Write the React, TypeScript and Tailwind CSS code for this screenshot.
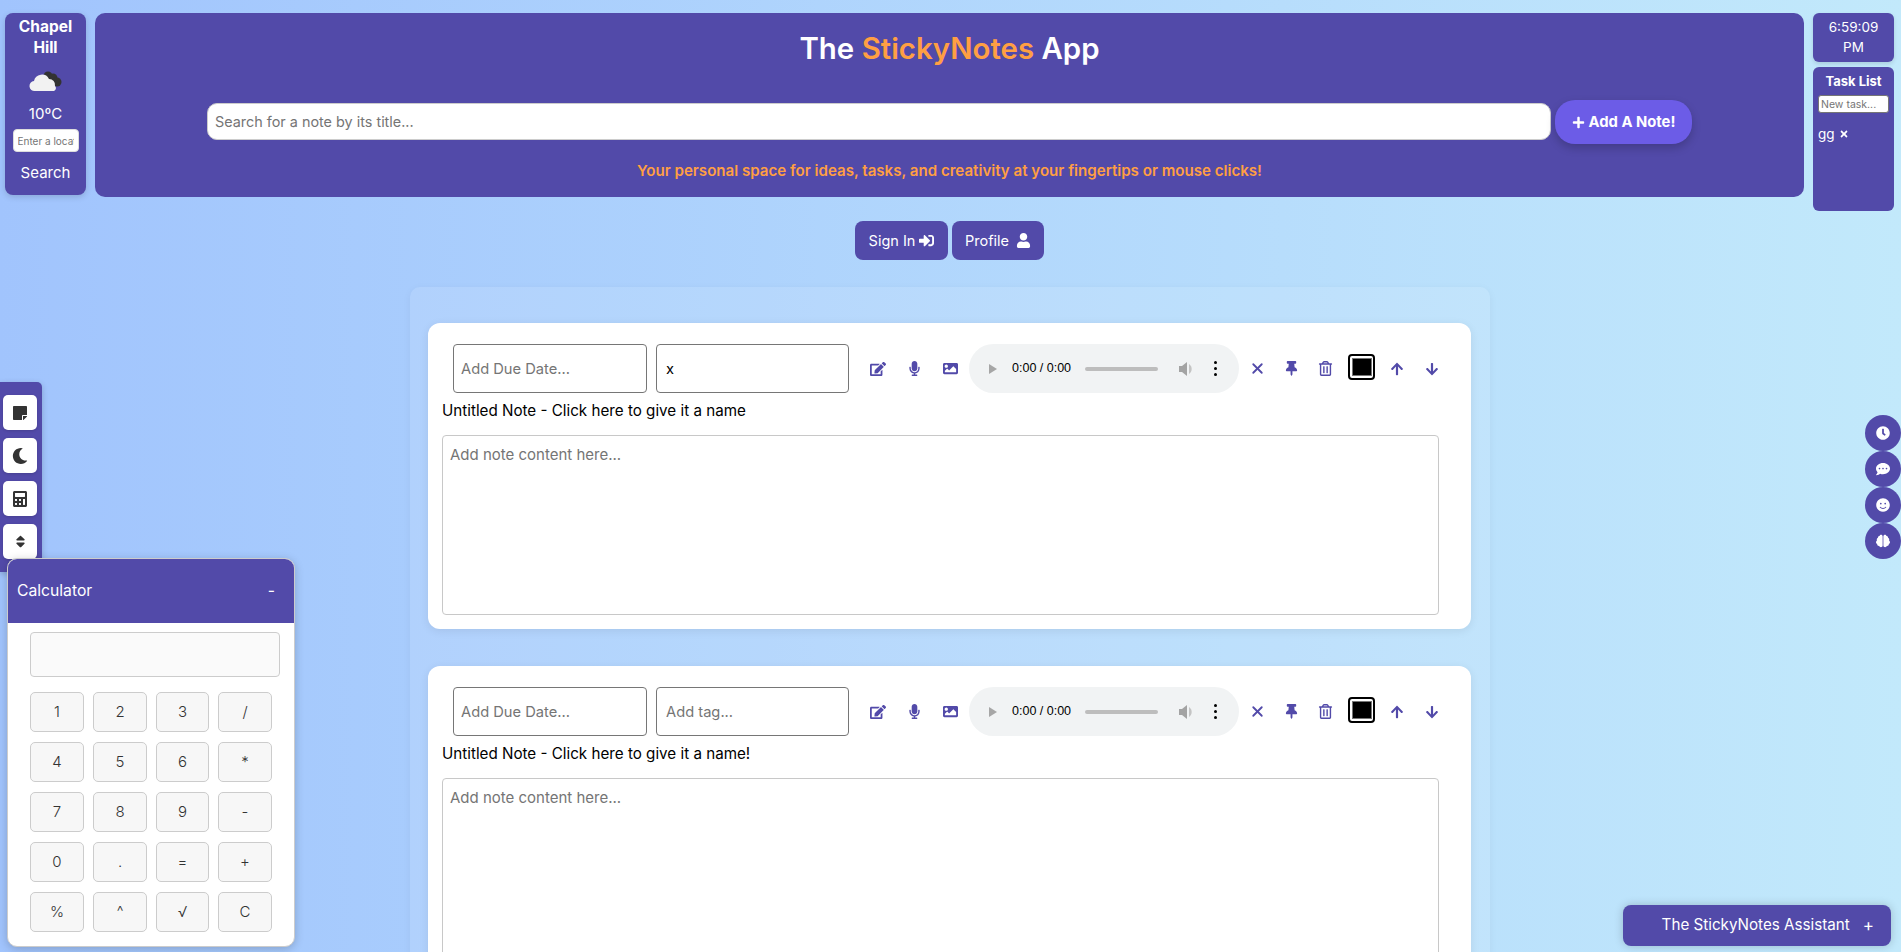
import {
  FaArrowDown,
  FaArrowUp,
  FaBrain,
  FaCalculator,
  FaClock,
  FaCommentDots,
  FaEdit,
  FaImage,
  FaMicrophone,
  FaMoon,
  FaPlus,
  FaRegTrashAlt,
  FaSignInAlt,
  FaSmile,
  FaSort,
  FaStickyNote,
  FaThumbtack,
  FaTimes,
  FaUser,
} from 'react-icons/fa'
import { X } from 'lucide-react'

const calcKeys = ['1', '2', '3', '/', '4', '5', '6', '*', '7', '8', '9', '-', '0', '.', '=', '+', '%', '^', '√', 'C']

function CloudIcon() {
  return (
    <svg width="34" height="22" viewBox="0 0 34 22">
      <g fill="#333333">
        <circle cx="19" cy="6" r="4.5" />
        <circle cx="24" cy="8" r="4.5" />
        <circle cx="28" cy="12" r="4.5" />
      </g>
      <path
        d="M6 21a5 5 0 0 1-1-10 8 8 0 0 1 15-2 6 6 0 0 1 6 7 3 3 0 0 1-1 5z"
        fill="#f2f2f2"
      />
    </svg>
  )
}

function AudioBar() {
  return (
    <div className="flex h-[49px] w-[270px] shrink-0 items-center rounded-full bg-[#f1f3f4] font-['Liberation_Sans',sans-serif] text-[12.5px] text-black">
      <svg className="ml-[20px]" width="8" height="10" viewBox="0 0 8 10">
        <path d="M0 0l8 5-8 5z" fill="#a6a6a6" />
      </svg>
      <span className="ml-[15px] w-[58px] whitespace-nowrap">0:00 / 0:00</span>
      <div className="ml-[15px] h-[4px] w-[73px] rounded-full bg-[#bdbdbd]" />
      <svg className="ml-[21px]" width="16" height="16" viewBox="0 0 16 16">
        <path d="M0 5h3l5-4v14l-5-4H0z" fill="#a3a3a3" />
        <path d="M10 3a6 6 0 0 1 0 10z" fill="#c4c4c4" />
      </svg>
      <div className="ml-[19px] flex flex-col gap-[3px]">
        <span className="size-[3px] rounded-full bg-black" />
        <span className="size-[3px] rounded-full bg-black" />
        <span className="size-[3px] rounded-full bg-black" />
      </div>
    </div>
  )
}

function NoteCard({ tag, title }: { tag?: string; title: string }) {
  return (
    <div className="h-[306px] w-[1043px] shrink-0 rounded-[12px] bg-white pl-[14px] pr-[32px] pt-[21px] shadow-[0_2px_10px_rgba(0,0,0,0.08)]">
      <div className="flex w-[1020px] items-center pl-[11px] text-[#524aa9]">
        <input
          placeholder="Add Due Date..."
          className="h-[49px] w-[194px] rounded-[4px] border border-[#767676] px-[7px] text-[14.7px] text-black placeholder:text-[#757575]"
        />
        <input
          placeholder="Add tag..."
          defaultValue={tag}
          className="ml-[9px] h-[49px] w-[193px] rounded-[4px] border border-[#767676] px-[9px] text-[14.7px] text-black placeholder:text-[#757575]"
        />
        <div className="ml-[11px] flex w-[36px] justify-center">
          <FaEdit size={16} />
        </div>
        <div className="flex w-[36px] justify-center">
          <FaMicrophone size={15} />
        </div>
        <div className="flex w-[36px] justify-center">
          <FaImage size={15} />
        </div>
        <div className="ml-[1px]">
          <AudioBar />
        </div>
        <div className="flex w-[36px] justify-center">
          <X size={17} strokeWidth={2.6} />
        </div>
        <div className="flex w-[33px] justify-center">
          <FaThumbtack size={15} />
        </div>
        <div className="flex w-[35px] justify-center">
          <FaRegTrashAlt size={15} />
        </div>
        <div className="mb-[4px] ml-[5px] flex h-[26px] w-[27px] items-center justify-center rounded-[4px] border-2 border-black bg-white">
          <div className="h-[18px] w-[20px] border border-[#767676] bg-black" />
        </div>
        <div className="ml-[11px] flex w-[22px] justify-center">
          <FaArrowUp size={14} />
        </div>
        <div className="ml-[13px] flex w-[22px] justify-center">
          <FaArrowDown size={14} />
        </div>
      </div>
      <div className="mt-[6px] h-[24px] text-[15.2px] leading-[24px] text-black">{title}</div>
      <textarea
        placeholder="Add note content here..."
        className="mt-[12px] block h-[180px] w-[997px] resize-none rounded-[4px] border border-[#c8c8c8] px-[7px] py-[8px] text-[15px] placeholder:text-[#757575]"
      />
    </div>
  )
}

function SideTool({ children }: { children: React.ReactNode }) {
  return (
    <div className="flex h-[35px] w-[34px] items-center justify-center rounded-[5px] bg-white text-[#333333] shadow-[0_1px_3px_rgba(0,0,0,0.15)]">
      {children}
    </div>
  )
}

function RoundTool({ children }: { children: React.ReactNode }) {
  return (
    <div className="flex size-[36px] items-center justify-center rounded-full bg-[#524aa9] text-white">
      {children}
    </div>
  )
}

export default function App() {
  return (
    <div className="relative h-[952px] w-full overflow-hidden bg-linear-to-r from-[#a1c4fd] to-[#c2e9fb] font-['Inter',sans-serif] text-white">
      <div className="flex items-start gap-[9px] pl-[5px] pr-[7px] pt-[13px]">
        <div className="flex h-[182px] w-[81px] shrink-0 flex-col items-center rounded-[8px] bg-[#524aa9] pt-[3px] shadow-[0_2px_6px_rgba(0,0,0,0.15)]">
          <div className="text-center text-[15.5px] font-bold leading-[21px]">
            Chapel
            <br />
            Hill
          </div>
          <div className="mt-[12px] h-[22px]">
            <CloudIcon />
          </div>
          <div className="mt-[10px] text-[15px] leading-[24px]">10ºC</div>
          <input
            placeholder="Enter a location"
            className="mt-[3px] h-[23px] w-[66px] rounded-[4px] border border-[#dddddd] bg-white px-[4px] text-[10px] text-black placeholder:text-[#757575]"
          />
          <div className="mt-[9px] text-[15px] leading-[24px]">Search</div>
        </div>

        <div className="flex h-[184px] min-w-0 flex-1 flex-col items-center rounded-[10px] bg-[#524aa9]">
          <h1 className="mt-[16px] h-[40px] text-[29.4px] font-semibold leading-[40px]">
            The <span className="text-[#ff9f43]">StickyNotes</span> App
          </h1>
          <div className="mt-[31px] flex w-full items-center pl-[112px]">
            <input
              placeholder="Search for a note by its title..."
              className="mb-[1px] h-[37px] w-[1344px] rounded-[10px] border border-[#cccccc] bg-white px-[7px] text-[14.4px] text-black placeholder:text-[#757575]"
            />
            <div className="ml-[4px] flex h-[44px] w-[137px] items-center justify-center gap-[4px] rounded-[20px] bg-[#6c5ce7] text-[14.8px] font-bold shadow-[0_4px_10px_rgba(0,0,0,0.2)]">
              <FaPlus size={13} />
              Add A Note!
            </div>
          </div>
          <p className="mt-[16px] text-[15.1px] font-semibold leading-[22px] text-[#ff9f43]">
            Your personal space for ideas, tasks, and creativity at your fingertips or mouse clicks!
          </p>
        </div>

        <div className="flex w-[81px] shrink-0 flex-col gap-[5px]">
          <div className="flex h-[49px] flex-col items-center justify-center rounded-[6px] bg-[#524aa9] pb-[2px] text-[13.5px] leading-[20px] shadow-[0_2px_4px_rgba(0,0,0,0.12)]">
            <span>6:59:09</span>
            <span>PM</span>
          </div>
          <div className="flex h-[144px] flex-col rounded-[6px] bg-[#524aa9] px-[5px] pt-[4px]">
            <div className="text-center text-[13px] font-bold leading-[20px]">Task List</div>
            <input
              placeholder="New task..."
              className="mt-[4px] h-[18px] w-[71px] rounded-[3px] border border-[#767676] bg-white px-[2px] text-[10.5px] text-black placeholder:text-[#757575]"
            />
            <div className="mt-[11px] flex items-center gap-[4px] text-[13.5px] leading-[20px]">
              gg <FaTimes size={10} />
            </div>
          </div>
        </div>
      </div>

      <div className="mt-[10px] flex justify-center gap-[4px] pr-[2px]">
        <div className="flex h-[39px] w-[93px] items-center justify-center gap-[4px] rounded-[8px] bg-[#524aa9] text-[14.5px]">
          Sign In <FaSignInAlt size={15} />
        </div>
        <div className="flex h-[39px] w-[92px] items-center justify-center gap-[7px] rounded-[8px] bg-[#524aa9] text-[14.5px]">
          Profile <FaUser size={15} />
        </div>
      </div>

      <div className="ml-[410px] mt-[27px] flex h-[800px] w-[1080px] flex-col gap-[37px] rounded-[10px] bg-white/10 pl-[18px] pt-[36px] shadow-[0_2px_8px_rgba(0,0,0,0.05)]">
        <NoteCard tag="x" title="Untitled Note - Click here to give it a name" />
        <NoteCard title="Untitled Note - Click here to give it a name!" />
      </div>

      <div className="absolute left-0 top-[382px] flex h-[190px] w-[42px] flex-col gap-[8px] rounded-r-[5px] bg-[#524aa9] pl-[3px] pt-[13px] shadow-[0_2px_6px_rgba(0,0,0,0.2)]">
        <SideTool>
          <FaStickyNote size={16} />
        </SideTool>
        <SideTool>
          <FaMoon size={16} />
        </SideTool>
        <SideTool>
          <FaCalculator size={16} />
        </SideTool>
        <SideTool>
          <FaSort size={15} />
        </SideTool>
      </div>

      <div className="absolute left-[7px] top-[558px] h-[389px] w-[288px] overflow-hidden rounded-[10px] border border-[#cccccc] bg-white text-[#333333] shadow-[0_2px_10px_rgba(0,0,0,0.2)]">
        <div className="flex h-[64px] items-center justify-between bg-[#524aa9] pl-[9px] pr-[19px] text-[15.7px] text-white">
          <span>Calculator</span>
          <span>-</span>
        </div>
        <input
          readOnly
          className="ml-[22px] mt-[9px] block h-[45px] w-[250px] rounded-[4px] border border-[#cccccc] bg-[#fafafa]"
        />
        <div className="ml-[22px] mt-[15px] grid grid-cols-[54px_54px_53px_54px] gap-x-[9px] gap-y-[10px]">
          {calcKeys.map(key => (
            <div
              key={key}
              className="flex h-[40px] items-center justify-center rounded-[5px] border border-[#cccccc] bg-[#f7f7f7] text-[15px] font-light"
            >
              {key}
            </div>
          ))}
        </div>
      </div>

      <div className="absolute right-0 top-[415px] flex flex-col">
        <RoundTool>
          <FaClock size={14} />
        </RoundTool>
        <RoundTool>
          <FaCommentDots size={14} />
        </RoundTool>
        <RoundTool>
          <FaSmile size={14} />
        </RoundTool>
        <RoundTool>
          <FaBrain size={14} />
        </RoundTool>
      </div>

      <div className="absolute left-[1623px] top-[905px] flex h-[41px] w-[268px] items-center justify-end gap-[13px] rounded-[8px] bg-[#524aa9] pr-[17px] text-[15.2px] shadow-[0_0_10px_rgba(0,0,0,0.2)]">
        <span>The StickyNotes Assistant</span>
        <span className="text-[17px]">+</span>
      </div>
    </div>
  )
}
